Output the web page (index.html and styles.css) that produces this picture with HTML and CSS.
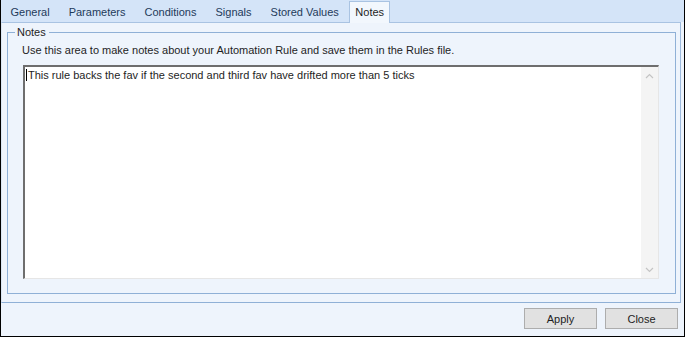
FILE: index.html
```html
<!DOCTYPE html>
<html>
<head>
<meta charset="utf-8">
<link rel="stylesheet" href="styles.css">
</head>
<body>
<div class="window">
  <div class="tabstrip">
    <span class="tab">General</span>
    <span class="tab">Parameters</span>
    <span class="tab">Conditions</span>
    <span class="tab">Signals</span>
    <span class="tab">Stored Values</span>
    <span class="tab active">Notes</span>
  </div>
  <div class="panel">
    <fieldset class="group">
      <legend class="legend">Notes</legend>
      <div class="desc">Use this area to make notes about your Automation Rule and save them in the Rules file.</div>
      <div class="editor">
        <div class="editor-text"><span class="caret"></span>This rule backs the fav if the second and third fav have drifted more than 5 ticks</div>
        <div class="scroll">
          <svg class="arrow" width="9" height="6" viewBox="0 0 9 6"><path d="M1 5 L4.5 1.5 L8 5" fill="none" stroke="#c4c4c4" stroke-width="1.2"/></svg>
          <svg class="arrow" width="9" height="6" viewBox="0 0 9 6"><path d="M1 1 L4.5 4.5 L8 1" fill="none" stroke="#c4c4c4" stroke-width="1.2"/></svg>
        </div>
      </div>
    </fieldset>
  </div>
  <div class="footer">
    <button class="btn">Apply</button>
    <button class="btn">Close</button>
  </div>
</div>
</body>
</html>
```

FILE: styles.css
```css
html, body {
  margin: 0;
  padding: 0;
  background: #eef4fc;
}
.window {
  width: 685px;
  height: 337px;
  box-sizing: border-box;
  border: 1px solid #000;
  border-top: none;
  background: #eef4fc;
  display: flex;
  flex-direction: column;
  font-family: "Liberation Sans", Arial, sans-serif;
  font-size: 11px;
  color: #1e1e1e;
}
.tabstrip {
  height: 22px;
  background: #d4e4f8;
  display: flex;
  align-items: flex-end;
  padding-left: 0;
  flex-shrink: 0;
}
.tab {
  padding: 0 9.5px;
  height: 20px;
  line-height: 20px;
  color: #1e3a5a;
}
.tab.active {
  background: #f2f7fd;
  border: 1px solid #a9c3e2;
  border-bottom: none;
  height: 21px;
  line-height: 20px;
  margin-left: 1px;
  padding: 0 5px;
  color: #1e1e1e;
  position: relative;
  top: 1px;
}
.panel {
  flex: 1;
  border-top: 1px solid #a9c3e2;
  border-left: 1px solid #dbe6f3;
  border-right: 1px solid #9dbadd;
  border-bottom: 1px solid #8fb0d6;
  margin-right: 3px;
  padding: 3px 4px 8px 5px;
  display: flex;
}
.group {
  flex: 1;
  margin: 0;
  border: 1px solid #8fb0d6;
  padding: 6px 16px 14px 14px;
  display: flex;
  flex-direction: column;
  min-width: 0;
}
.legend {
  padding: 0 3px 0 2px;
  margin-left: -7px;
  color: #1e1e1e;
}
.desc {
  height: 13px;
  line-height: 13px;
  margin-bottom: 8px;
}
.editor {
  flex: 1;
  margin-left: 1px;
  background: #fff;
  border-top: 2px solid #6e6e6e;
  border-left: 2px solid #6e6e6e;
  border-right: 1px solid #e6e6e6;
  border-bottom: 1px solid #e6e6e6;
  display: flex;
}
.editor-text {
  flex: 1;
  padding: 2px 2px 0 1px;
  line-height: 13px;
  color: #1e1e1e;
}
.caret {
  display: inline-block;
  width: 1px;
  height: 12px;
  background: #000;
  vertical-align: -2px;
  margin-right: 1px;
}
.scroll {
  width: 17px;
  background: #f4f4f4;
  display: flex;
  flex-direction: column;
  justify-content: space-between;
  align-items: center;
  padding: 6px 0 5px;
}
.footer {
  height: 33px;
  flex-shrink: 0;
  display: flex;
  justify-content: flex-end;
  align-items: flex-start;
  padding: 5px 6px 0 0;
  box-sizing: border-box;
  gap: 8px;
}
.btn {
  width: 73px;
  height: 21px;
  background: #e1e1e1;
  border: 1px solid #adadad;
  font-family: "Liberation Sans", Arial, sans-serif;
  font-size: 11px;
  color: #1e1e1e;
  padding: 0;
  border-radius: 0;
}
```
